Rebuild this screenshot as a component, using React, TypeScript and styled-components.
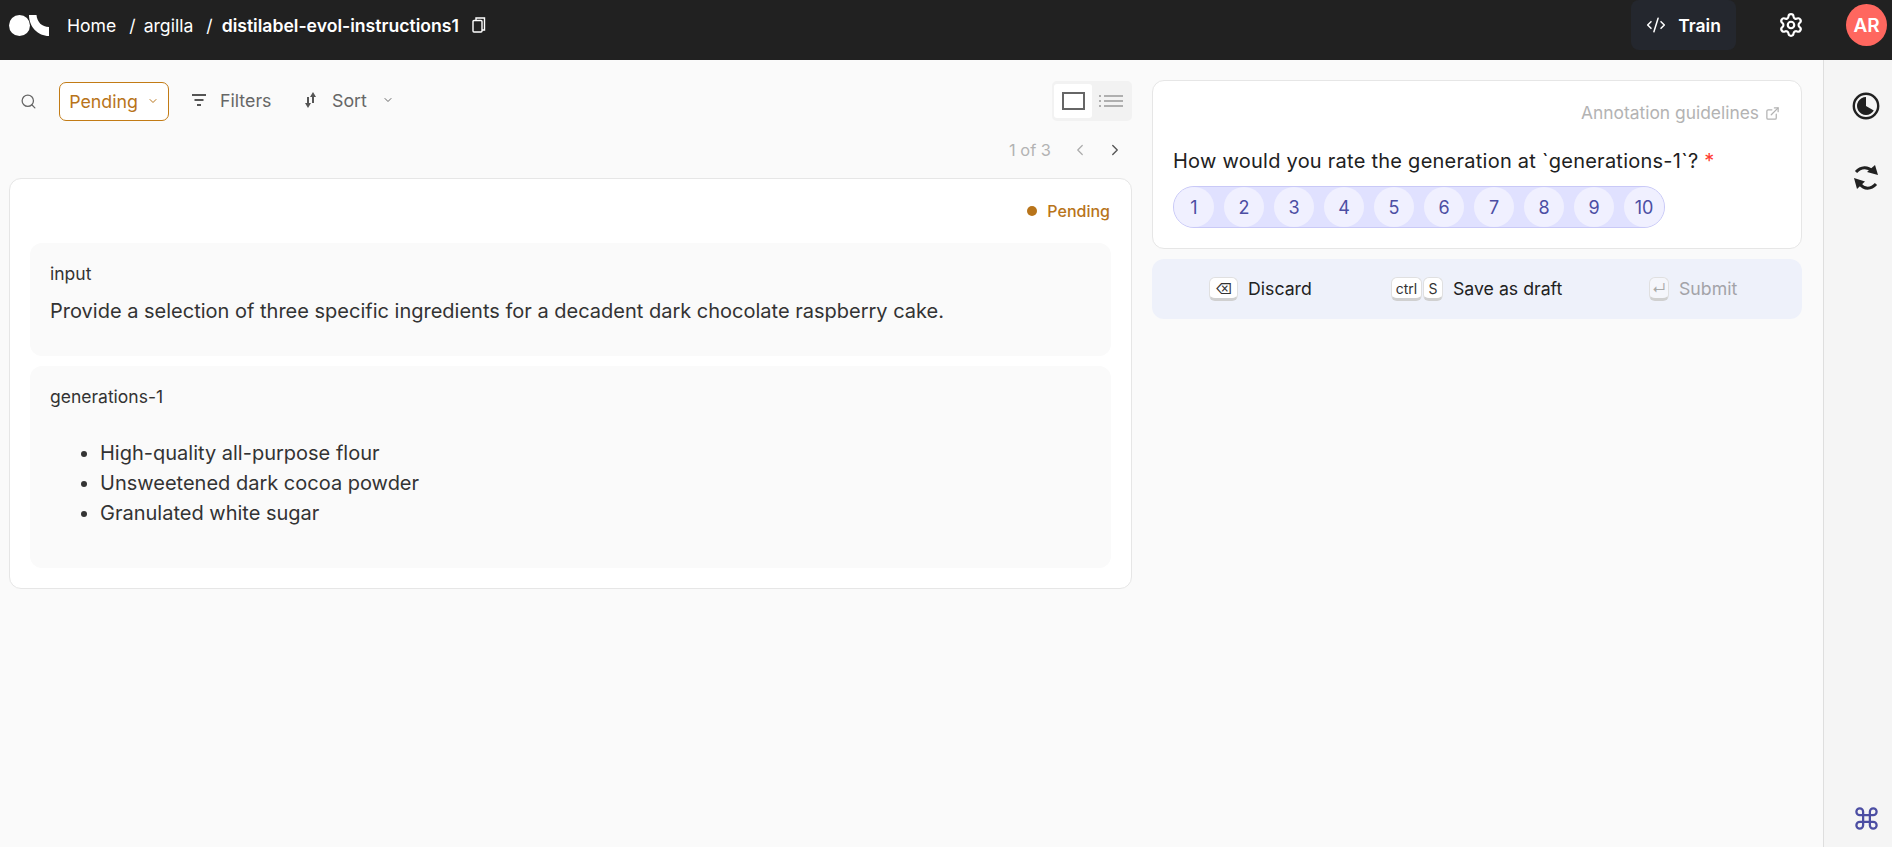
import React from "react";
import styled, { createGlobalStyle } from "styled-components";
import { Search, ChevronDown, ChevronLeft, ChevronRight, Settings, Command, ExternalLink, CodeXml } from "lucide-react";

const Global = createGlobalStyle`
  html, body { margin: 0; padding: 0; height: 100%; overflow: hidden; }
  body { font-family: Inter, "Liberation Sans", sans-serif; background: #fafafa; color: #212121; }
  * { box-sizing: border-box; }
`;

const Page = styled.div`
  width: 1892px; height: 847px; display: flex; flex-direction: column; overflow: hidden;
`;
const Header = styled.header`
  height: 60px; background: #212121; color: #fff; display: flex; align-items: center;
  padding: 0 5px 10px 9px; flex: none;
`;
const Logo = styled.svg`
  width: 40px; height: 21px; margin-right: 18px; flex: none;
`;
const Crumb = styled.span<{ $bold?: boolean }>`
  font-size: 17.6px; font-weight: ${p => (p.$bold ? 600 : 400)}; white-space: nowrap;
`;
const Slash = styled.span<{ $last?: boolean }>`
  font-size: 17.6px; margin: 0 ${p => (p.$last ? 9 : 8)}px 0 13px;
`;
const CopyIcon = styled.svg`
  width: 14px; height: 16px; margin-left: 13px; flex: none;
`;
const HeaderSpacer = styled.div` flex: 1; `;
const TrainButton = styled.div`
  width: 105px; height: 50px; background: #24272e; border-radius: 8px; display: flex; align-items: center;
  justify-content: center; gap: 12px; font-size: 17.5px; font-weight: 600; margin-right: 42px;
`;
const GearWrap = styled.div`
  display: flex; margin-right: 42px;
`;
const Avatar = styled.div`
  width: 41px; height: 42px; border-radius: 50%; background: #ff675f; display: flex; align-items: center;
  justify-content: center; font-size: 19px; font-weight: 600;
`;
const Body = styled.div` flex: 1; display: flex; min-height: 0; `;
const Left = styled.section`
  width: 1123px; margin-left: 9px; flex: none; display: flex; flex-direction: column;
`;
const Toolbar = styled.div`
  height: 40px; margin-top: 21px; display: flex; align-items: center; color: #666;
`;
const SearchSlot = styled.div`
  width: 50px; padding-left: 11px; display: flex; color: #666;
`;
const StatusButton = styled.div`
  width: 110px; height: 39px; border: 1px solid #c27b15; border-radius: 7px; background: #fff; color: #b8741a;
  display: flex; align-items: center; justify-content: center; gap: 9px; font-size: 17.8px; margin-right: 22px;
`;
const ToolItem = styled.div<{ $w: number }>`
  width: ${p => p.$w}px; display: flex; align-items: center; font-size: 17.8px; color: #666; padding-bottom: 2px;
`;
const ToolIcon = styled.svg`
  width: 16px; height: 16px; margin-right: 13px; flex: none;
`;
const SortChevron = styled.span`
  display: flex; margin-left: 15px;
`;
const Grow = styled.div` flex: 1; `;
const Toggle = styled.div`
  width: 80px; height: 40px; border-radius: 5px; background: #f2f2f2; padding: 3px 3px 3px 2px; display: flex; align-items: stretch;
`;
const ToggleOn = styled.div`
  width: 38px; background: #fff; border-radius: 3px; display: flex; align-items: center; justify-content: center;
`;
const ToggleOff = styled.div`
  flex: 1; display: flex; align-items: center; justify-content: center;
`;
const Pager = styled.div`
  height: 26px; margin-top: 16px; display: flex; align-items: center; justify-content: flex-end; padding-right: 8px; font-size: 16.4px; color: #b3b3b3;
`;
const PagerArrow = styled.span<{ $on?: boolean }>`
  display: flex; margin-left: ${p => (p.$on ? 17 : 20)}px; color: ${p => (p.$on ? "#555" : "#aaa")};
`;
const RecordCard = styled.article`
  margin-top: 15px; background: #fff; border: 1px solid #e6e6e6; border-radius: 12px; padding: 20px; height: 411px;
`;
const StatusLine = styled.div`
  height: 24px; margin-bottom: 20px; display: flex; align-items: center; justify-content: flex-end; gap: 10px; color: #b8741a; font-size: 16px; font-weight: 500; padding-right: 1px;
`;
const Dot = styled.span`
  width: 10px; height: 10px; border-radius: 50%; background: #b8741a;
`;
const Field = styled.div<{ $h: number }>`
  height: ${p => p.$h}px; background: #fafafa; border-radius: 12px; padding: 21px 20px 0; margin-bottom: 10px;
`;
const FieldTitle = styled.div`
  font-size: 17.5px; line-height: 20px; color: #333;
`;
const FieldText = styled.div`
  font-size: 20px; line-height: 30px; margin-top: 12px; color: #333;
`;
const Bullets = styled.ul`
  margin: 31px 0 0; padding: 0 0 0 50px; font-size: 20px; line-height: 30px; color: #333;
`;
const Right = styled.aside`
  width: 650px; margin-left: 20px; margin-top: 20px; flex: none; display: flex; flex-direction: column; gap: 10px;
`;
const QuestionCard = styled.div`
  height: 169px; background: #fff; border: 1px solid #e6e6e6; border-radius: 12px; padding: 20px 20px 0;
`;
const Guidelines = styled.div`
  display: flex; justify-content: flex-end; align-items: center; gap: 6px; font-size: 17.4px; line-height: 24px; color: #b3b3b3; padding-right: 1px;
`;
const Question = styled.div`
  margin-top: 22px; font-size: 20px; letter-spacing: 0.25px; line-height: 28px; color: #212121;
`;
const Required = styled.span` color: #ff3b30; `;
const RatingPill = styled.div`
  margin-top: 11px; display: inline-flex; gap: 10px; height: 42px; border: 1px solid #c9c9f7; border-radius: 21px; background: #e0e1ff; width: fit-content;
`;
const RatingItem = styled.div`
  width: 40px; height: 40px; border-radius: 50%; background: #f0f0ff; color: #4c4ea3; font-size: 18px; display: flex; align-items: center; justify-content: center;
`;
const ActionBar = styled.div`
  height: 60px; background: #eef1fa; border-radius: 12px; display: flex; align-items: center; padding-left: 57px;
`;
const Action = styled.div<{ $w: number; $off?: boolean }>`
  width: ${p => p.$w}px; display: flex; align-items: center; font-size: 17.7px; color: ${p => (p.$off ? "#a3a3a8" : "#212121")}; flex: none;
`;
const Kbd = styled.span<{ $w: number; $off?: boolean }>`
  width: ${p => p.$w}px; height: 24px; border: 1px solid #e0e0e0; border-bottom: 3px solid #d0d0d0; border-radius: 6px; background: ${p => (p.$off ? "#f5f6fb" : "#fff")};
  font-size: 14px; display: inline-flex; align-items: center; justify-content: center; margin-right: 1px; flex: none; color: ${p => (p.$off ? "#aaa" : "#333")};
`;
const ActionLabel = styled.span`
  margin-left: 9px; white-space: nowrap; line-height: 22px; margin-bottom: 1px;
`;
const Sidebar = styled.nav`
  margin-left: 21px; flex: 1; border-left: 1px solid #dedede; background: #f5f5f5; display: flex; flex-direction: column; align-items: center; padding: 32px 0 15px 16px;
`;
const SideIcon = styled.svg`
  width: 28px; height: 28px; margin-bottom: 43px; flex: none;
`;
const SideSpacer = styled.div` flex: 1; `;

export default function App() {
  return (
    <Page>
      <Global />
      <Header>
        <Logo viewBox="0 0 40 21">
          <circle cx="10.5" cy="10.5" r="10.5" fill="#fff" />
          <path d="M20 0H27.5C28 7 33 12 40 12V21C29 21 20 12 20 0Z" fill="#fff" />
        </Logo>
        <Crumb>Home</Crumb>
        <Slash>/</Slash>
        <Crumb>argilla</Crumb>
        <Slash $last>/</Slash>
        <Crumb $bold>distilabel-evol-instructions1</Crumb>
        <CopyIcon viewBox="0 0 14 16" fill="none" stroke="#fff" strokeWidth="1.4">
          <path d="M4 3V1H12.5V13H10" />
          <rect x="1" y="3.5" width="9" height="11.5" rx="1" />
        </CopyIcon>
        <HeaderSpacer />
        <TrainButton>
          <CodeXml size={20} strokeWidth={1.8} />
          Train
        </TrainButton>
        <GearWrap><Settings size={26} strokeWidth={2} /></GearWrap>
        <Avatar>AR</Avatar>
      </Header>
      <Body>
        <Left>
          <Toolbar>
            <SearchSlot><Search size={17} strokeWidth={1.8} /></SearchSlot>
            <StatusButton>Pending <ChevronDown size={12} strokeWidth={2} /></StatusButton>
            <ToolItem $w={112}>
              <ToolIcon viewBox="0 0 16 16" stroke="#555" strokeWidth="2">
                <path d="M1 3H15M3.5 8H12.5M6 13H10" />
              </ToolIcon>
              Filters
            </ToolItem>
            <ToolItem $w={100}>
              <ToolIcon viewBox="0 0 16 16" fill="#555">
                <path d="M4 5H6V11H8L5 16L2 11H4ZM10 0L13 5H11V11H9V5H7Z" />
              </ToolIcon>
              Sort
              <SortChevron><ChevronDown size={12} strokeWidth={2} /></SortChevron>
            </ToolItem>
            <Grow />
            <Toggle>
              <ToggleOn>
                <svg width="23" height="18" viewBox="0 0 23 18" fill="none" stroke="#666" strokeWidth="2"><rect x="1" y="1" width="21" height="16" /></svg>
              </ToggleOn>
              <ToggleOff>
                <svg width="24" height="14" viewBox="0 0 24 14" stroke="#999" strokeWidth="1.4"><path d="M0 2H2M5 2H24M0 7H2M5 7H24M0 12H2M5 12H24" /></svg>
              </ToggleOff>
            </Toggle>
          </Toolbar>
          <Pager>
            1 of 3
            <PagerArrow><ChevronLeft size={18} strokeWidth={1.6} /></PagerArrow>
            <PagerArrow $on><ChevronRight size={18} strokeWidth={1.8} /></PagerArrow>
          </Pager>
          <RecordCard>
            <StatusLine><Dot />Pending</StatusLine>
            <Field $h={113}>
              <FieldTitle>input</FieldTitle>
              <FieldText>Provide a selection of three specific ingredients for a decadent dark chocolate raspberry cake.</FieldText>
            </Field>
            <Field $h={202}>
              <FieldTitle>generations-1</FieldTitle>
              <Bullets>
                <li>High-quality all-purpose flour</li>
                <li>Unsweetened dark cocoa powder</li>
                <li>Granulated white sugar</li>
              </Bullets>
            </Field>
          </RecordCard>
        </Left>
        <Right>
          <QuestionCard>
            <Guidelines>Annotation guidelines <ExternalLink size={15} strokeWidth={2} /></Guidelines>
            <Question>How would you rate the generation at `generations-1`? <Required>*</Required></Question>
            <RatingPill>
              {[1, 2, 3, 4, 5, 6, 7, 8, 9, 10].map(n => <RatingItem key={n}>{n}</RatingItem>)}
            </RatingPill>
          </QuestionCard>
          <ActionBar>
            <Action $w={182}><Kbd $w={29}>⌫</Kbd><ActionLabel>Discard</ActionLabel></Action>
            <Action $w={258}><Kbd $w={31}>ctrl</Kbd><Kbd $w={20}>S</Kbd><ActionLabel>Save as draft</ActionLabel></Action>
            <Action $w={100} $off><Kbd $w={20} $off>↵</Kbd><ActionLabel>Submit</ActionLabel></Action>
          </ActionBar>
        </Right>
        <Sidebar>
          <SideIcon viewBox="0 0 28 28" fill="none">
            <circle cx="14" cy="14" r="12.2" stroke="#212121" strokeWidth="2.4" />
            <path d="M14 5A9 9 0 1 0 21.8 18.5L14 14Z" fill="#212121" />
          </SideIcon>
          <SideIcon viewBox="0 0 28 28" fill="none" stroke="#212121" strokeWidth="3">
            <path d="M4 9C9 3.5 16 3.5 20 8" />
            <path d="M26 12L15 9L23 2Z" fill="#212121" stroke="none" />
            <path d="M24 21C19 26.5 12 26.5 8 21" />
            <path d="M2 15L13 18.5L5 26Z" fill="#212121" stroke="none" />
          </SideIcon>
          <SideSpacer />
          <Command size={27} color="#4c4ea3" strokeWidth={2} />
        </Sidebar>
      </Body>
    </Page>
  );
}
